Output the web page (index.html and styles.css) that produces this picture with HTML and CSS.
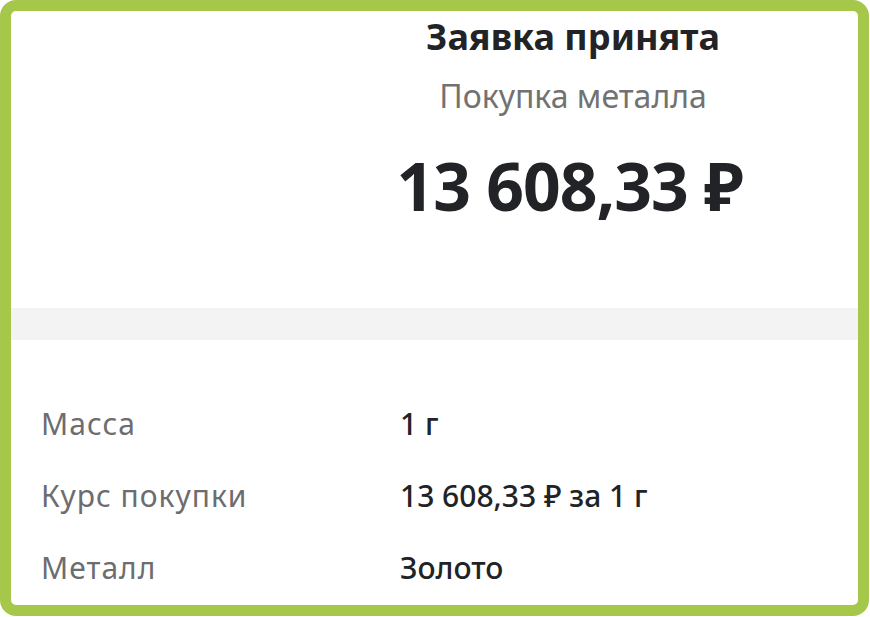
FILE: index.html
```html
<!DOCTYPE html>
<html lang="ru">
<head>
    <meta charset="UTF-8">
    <title>Заявка принята</title>
    <link rel="stylesheet" href="styles.css">
</head>
<body>

<div class="frame">
    <div class="head">
        <h1 class="title">Заявка принята</h1>
        <div class="subtitle">Покупка металла</div>
        <div class="amount">13 608,33 ₽</div>
    </div>

    <div class="band"></div>

    <div class="details">
        <div class="row">
            <span class="label">Масса</span>
            <span class="value">1 г</span>
        </div>
        <div class="row">
            <span class="label">Курс покупки</span>
            <span class="value">13 608,33 ₽ за 1 г</span>
        </div>
        <div class="row">
            <span class="label">Металл</span>
            <span class="value">Золото</span>
        </div>
    </div>
</div>

</body>
</html>
```

FILE: styles.css
```css
* {
    box-sizing: border-box;
}

body {
    margin: 0;
    background: #ffffff;
    font-family: "Noto Sans", "Open Sans", sans-serif;
    color: #222326;
}

.frame {
    width: 869px;
    height: 616px;
    border: 11px solid #a5c84b;
    border-radius: 16px;
    overflow: hidden;
    background: #ffffff;
}

/* верхняя часть с суммой */
.head {
    padding-left: 277px;
    text-align: center;
    height: 286px;
}

.title {
    margin: 0;
    font-size: 36px;
    font-weight: 700;
    line-height: 52px;
}

.subtitle {
    margin-top: 11px;
    font-size: 32px;
    color: #727272;
    line-height: 44px;
}

.amount {
    margin-top: 27px;
    padding-right: 7px;
    font-size: 66px;
    font-weight: 700;
    line-height: 80px;
    letter-spacing: -1px;
}

.band {
    height: 32px;
    background: #f3f3f3;
    margin-top: 11px;
}

.details {
    padding: 64px 0 0 30px;
}

.row {
    display: grid;
    grid-template-columns: 359px 1fr;
    height: 72px;
    font-size: 30px;
    line-height: 40px;
}

.label {
    color: #6d6d6f;
    letter-spacing: 1px;
}

.value {
    color: #222326;
    font-weight: 500;
}
```
